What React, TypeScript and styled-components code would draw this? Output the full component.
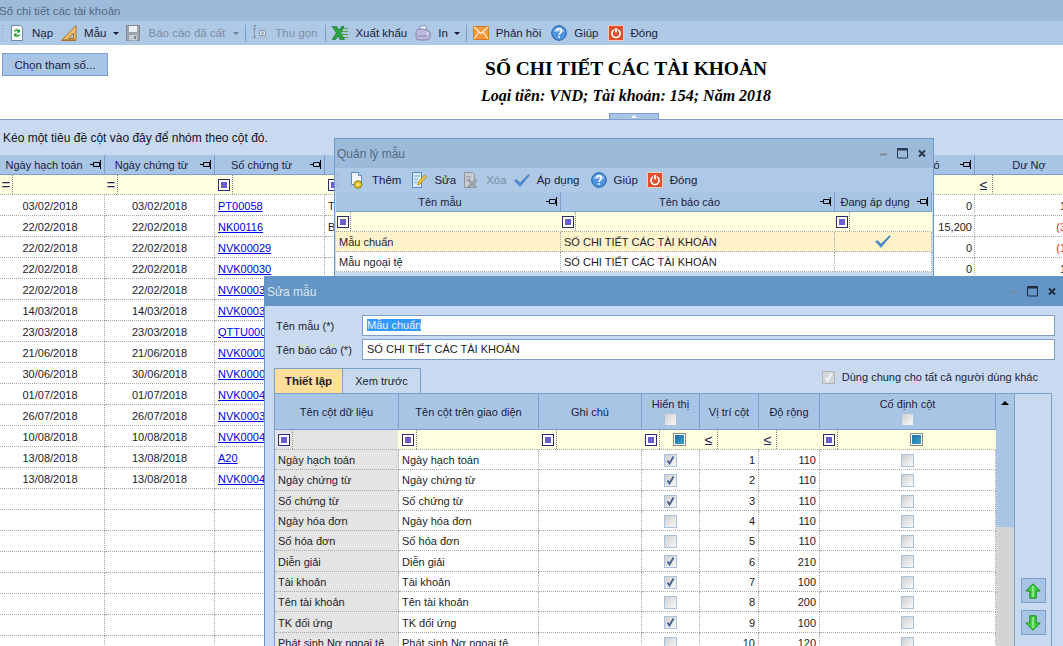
import styled, { createGlobalStyle } from "styled-components";

const GlobalStyle = createGlobalStyle`
  html, body {
    margin: 0;
    padding: 0;
    background: #fff;
    overflow: hidden;
  }
  body {
    font-family: "Liberation Sans", Arial, sans-serif;
    font-size: 11px;
    color: #1c1c28;
  }
`;

const HEADER_BG = "#a9c5e5";
const PANEL_BG = "#c9daf0";
const LINE = "#7d9fcb";
const DOTTED = "#a8a8a8";
const FILTER_BG = "#ffffdf";

const Page = styled.div`
  position: relative;
  width: 1063px;
  height: 646px;
  overflow: hidden;
  display: flex;
  flex-direction: column;
  background: #fff;
`;

const AppTitle = styled.div`
  height: 21px;
  flex-shrink: 0;
  box-sizing: border-box;
  padding-top: 1px;
  line-height: 20px;
  background: #9cbbda;
  color: #55677d;
  font-size: 11.5px;
  white-space: nowrap;
  text-indent: -1px;
`;

const Toolbar = styled.div<{ $height: number }>`
  height: ${(p) => p.$height}px;
  flex-shrink: 0;
  display: flex;
  align-items: center;
  background: #aec9e6;
  font-size: 11.5px;
  white-space: nowrap;
`;

const Grip = styled.span<{ $gap: number }>`
  width: 3px;
  height: 18px;
  margin: 0 ${(p) => p.$gap}px 0 1px;
  background-image: radial-gradient(#8ea6c2 0.8px, transparent 1px);
  background-size: 3px 3px;
`;

const ToolButton = styled.span<{ $disabled?: boolean; $after?: number }>`
  display: inline-flex;
  align-items: center;
  gap: 7px;
  margin-right: ${(p) => p.$after ?? 8}px;
  color: ${(p) => (p.$disabled ? "#7c8c9f" : "#1c1c3a")};
  svg {
    flex-shrink: 0;
  }
`;

const Caret = styled.span<{ $disabled?: boolean }>`
  width: 0;
  height: 0;
  margin: 0 6px 0 0;
  border-left: 3px solid transparent;
  border-right: 3px solid transparent;
  border-top: 3px solid ${(p) => (p.$disabled ? "#6f7f92" : "#1c1c3a")};
`;

const ToolSeparator = styled.span`
  width: 1px;
  height: 17px;
  background: #7d9fcb;
  margin: 0 6px 0 0;
`;

const ReportHeader = styled.div`
  height: 74px;
  flex-shrink: 0;
  display: flex;
  align-items: flex-start;
  position: relative;
  border-bottom: 1px solid ${LINE};
`;

const ParamButton = styled.button`
  width: 106px;
  height: 23px;
  margin: 8px 0 0 2px;
  padding: 0;
  flex-shrink: 0;
  background: ${HEADER_BG};
  border: 1px solid ${LINE};
  font: 11.5px "Liberation Sans", Arial, sans-serif;
  color: #1c1c3a;
`;

const ReportTitles = styled.div`
  flex: 1;
  padding: 13px 0 0 81px;
  text-align: center;
  color: #000;
  font-family: "Liberation Serif", "Times New Roman", serif;
  font-weight: bold;
`;

const ReportName = styled.div`
  font-size: 19.4px;
  line-height: 22px;
`;

const ReportSub = styled.div`
  font-size: 16px;
  line-height: 20px;
  margin-top: 6px;
  font-style: italic;
`;

const CollapseTab = styled.span`
  position: absolute;
  left: 609px;
  bottom: 0;
  width: 50px;
  height: 6px;
  display: flex;
  justify-content: center;
  align-items: center;
  background: ${HEADER_BG};
  border: 1px solid ${LINE};
  border-bottom: 0;
  box-sizing: border-box;
  &::after {
    content: "";
    border-left: 3px solid transparent;
    border-right: 3px solid transparent;
    border-bottom: 3px solid #fff;
  }
`;

const GroupPanel = styled.div`
  height: 35px;
  flex-shrink: 0;
  display: flex;
  align-items: center;
  padding: 0 0 0 3px;
  box-sizing: border-box;
  background: ${PANEL_BG};
  font-size: 12px;
  color: #14141e;
`;

const DataTable = styled.table<{ $width: number }>`
  table-layout: fixed;
  border-collapse: separate;
  border-spacing: 0;
  width: ${(p) => p.$width}px;
  font-size: 11px;
  flex-shrink: 0;
`;

const HeadCell = styled.th<{ $height?: number; $tall?: boolean }>`
  height: ${(p) => p.$height ?? 19}px;
  padding: 0 16px 0 0;
  position: relative;
  background: ${HEADER_BG};
  border-right: 1px solid ${LINE};
  border-bottom: 1px solid ${LINE};
  font-weight: normal;
  color: #1c1c3a;
  text-align: center;
  white-space: nowrap;
  overflow: hidden;
  ${(p) => p.$tall && "padding: 0;"}
`;

const PinSlot = styled.span`
  position: absolute;
  right: 2px;
  top: 50%;
  margin-top: -5px;
  display: flex;
`;

const HeadStack = styled.div`
  display: flex;
  flex-direction: column;
  align-items: center;
  gap: 3px;
  padding-top: 1px;
`;

const FilterRow = styled.td<{ $gray?: boolean; $height?: number }>`
  height: ${(p) => p.$height ?? 19}px;
  padding: 0;
  background: ${(p) => (p.$gray ? "#e4e4e4" : FILTER_BG)};
  border-right: 1px solid ${FILTER_BG};
  border-bottom: 1px dotted ${DOTTED};
`;

const FilterInner = styled.div`
  height: 100%;
  display: flex;
  align-items: center;
  position: relative;
`;

const FilterOp = styled.span<{ $width?: number }>`
  width: ${(p) => p.$width ?? 17}px;
  height: 100%;
  flex-shrink: 0;
  display: flex;
  align-items: center;
  justify-content: center;
  box-sizing: border-box;
  border-right: 1px dotted #888;
  color: #24245c;
  font-size: 15px;
`;

const LessEqual = styled.span`
  font-size: 14px;
  line-height: 1;
`;

const FilterSquare = styled.span`
  width: 6px;
  height: 6px;
  padding: 2px;
  border: 1px solid #2c2c6e;
  background: linear-gradient(#6a5fd0, #6a5fd0) content-box, #fff;
  display: block;
`;

const FilterCheck = styled.span`
  width: 9px;
  height: 9px;
  padding: 1px;
  border: 1px solid #8a8a8a;
  background: linear-gradient(135deg, #1b6fa8, #38a6c8) content-box, #fff;
  display: block;
  margin: 0 auto;
`;

const FilterCenter = styled.div`
  flex: 1;
  display: flex;
  justify-content: center;
`;

const Cell = styled.td<{
  $align?: string;
  $gray?: boolean;
  $selected?: boolean;
  $height?: number;
  $color?: string;
  $pad?: number;
  $padRight?: number;
}>`
  height: ${(p) => p.$height ?? 20}px;
  padding: 1px ${(p) => p.$padRight ?? p.$pad ?? 3}px 0 ${(p) => p.$pad ?? 3}px;
  box-sizing: border-box;
  text-align: ${(p) => p.$align ?? "left"};
  background: ${(p) => (p.$selected ? "#fff3cc" : p.$gray ? "#e4e4e4" : "#fff")};
  border-right: 1px dotted ${DOTTED};
  border-bottom: 1px dotted ${DOTTED};
  color: ${(p) => p.$color ?? "#1c1c28"};
  white-space: nowrap;
  overflow: hidden;
`;

const DocLink = styled.a`
  color: #0000ee;
  text-decoration: underline;
`;

const Win = styled.div<{ $left: number; $top: number; $width: number; $height: number; $title: string }>`
  position: absolute;
  left: ${(p) => p.$left}px;
  top: ${(p) => p.$top}px;
  width: ${(p) => p.$width}px;
  height: ${(p) => p.$height}px;
  box-sizing: border-box;
  border: 1px solid ${(p) => p.$title};
  overflow: hidden;
  background: ${PANEL_BG};
`;

const WinTitle = styled.div<{ $bg: string; $color: string; $height: number }>`
  height: ${(p) => p.$height}px;
  display: flex;
  align-items: center;
  justify-content: space-between;
  padding: 0 4px 0 2px;
  box-sizing: border-box;
  background: ${(p) => p.$bg};
  color: ${(p) => p.$color};
  font-size: 12px;
`;

const WinControls = styled.span`
  display: flex;
  align-items: center;
  gap: 8px;
`;

const ManagerBody = styled.div`
  padding: 0 1px;
`;

const FormBody = styled.div`
  padding: 9px 8px 0 9px;
`;

const FormRow = styled.div`
  display: flex;
  align-items: center;
  height: 21px;
  margin: 0 0 3px 2px;
  font-size: 11px;
  color: #1c1c28;
`;

const FormLabel = styled.label`
  width: 86px;
  flex-shrink: 0;
`;

const FormValue = styled.div`
  flex: 1;
  height: 21px;
  line-height: 19px;
  box-sizing: border-box;
  padding-left: 4px;
  background: #fff;
  border: 1px solid ${LINE};
`;

const SelectedText = styled.span`
  background: #3399ff;
  color: #e8f2ff;
`;

const TabRow = styled.div`
  display: flex;
  align-items: stretch;
  height: 25px;
  margin-top: 8px;
  font-size: 11px;
`;

const Tab = styled.span<{ $active?: boolean; $width: number }>`
  width: ${(p) => p.$width}px;
  display: flex;
  align-items: center;
  justify-content: center;
  box-sizing: border-box;
  border: 1px solid ${LINE};
  border-left-width: ${(p) => (p.$active ? 1 : 0)}px;
  border-bottom: 0;
  background: ${(p) => (p.$active ? "#ffe09a" : "transparent")};
  font-weight: ${(p) => (p.$active ? "bold" : "normal")};
  font-size: ${(p) => (p.$active ? 11.5 : 11)}px;
  color: #1c1c28;
`;

const ShareOption = styled.span`
  margin-left: auto;
  margin-right: 17px;
  display: flex;
  align-items: center;
  gap: 7px;
  padding-bottom: 7px;
  color: #1c1c3a;
`;

const GridFrame = styled.div`
  display: flex;
  width: 778px;
  border: 1px solid ${LINE};
  border-bottom: 0;
  box-sizing: border-box;
  height: 260px;
`;

const ScrollBar = styled.div`
  width: 18px;
  flex-shrink: 0;
  background: #d4d4d4;
  border-right: 1px solid ${LINE};
  position: relative;
`;

const ScrollThumb = styled.div`
  height: 133px;
  background: ${HEADER_BG};
  display: flex;
  justify-content: center;
  padding-top: 7px;
  box-sizing: border-box;
  &::before {
    content: "";
    height: 0;
    border-left: 4px solid transparent;
    border-right: 4px solid transparent;
    border-bottom: 4px solid #000;
  }
`;

const SidePanel = styled.div`
  flex: 1;
  display: flex;
  flex-direction: column;
  align-items: center;
  gap: 7px;
  padding-top: 184px;
`;

const ArrowButton = styled.span`
  width: 25px;
  height: 25px;
  box-sizing: border-box;
  display: flex;
  align-items: center;
  justify-content: center;
  background: ${HEADER_BG};
  border: 1px solid ${LINE};
`;

const CheckBoxWrap = styled.span<{ $disabled?: boolean }>`
  width: 13px;
  height: 13px;
  display: inline-flex;
  box-sizing: border-box;
  align-items: center;
  justify-content: center;
  vertical-align: middle;
  border: 1px solid ${(p) => (p.$disabled ? "#b4b4b4" : "#a9c0de")};
  background: ${(p) => (p.$disabled ? "#d4d7db" : "linear-gradient(135deg, #cfcfcf, #fafafa)")};
`;

function CheckBox({ checked, disabled }: { checked?: boolean; disabled?: boolean }) {
  return (
    <CheckBoxWrap $disabled={disabled}>
      {checked && (
        <svg width="11" height="11" viewBox="0 0 11 11">
          <path d="M2.500 5.500l2 3 4-7" fill="none" stroke={disabled ? "#f6f6f6" : "#41608f"} strokeWidth="1.800" />
        </svg>
      )}
    </CheckBoxWrap>
  );
}

function Pin() {
  return (
    <svg width="12" height="9" viewBox="0 0 12 9">
      <path d="M0 4.500h3M3.500 2.500h6v4h-6zM10.500 0v9" fill="none" stroke="#000" strokeWidth="1" />
    </svg>
  );
}

function ReloadIcon() {
  return (
    <svg width="16" height="16" viewBox="0 0 16 16">
      <path d="M2.500 .5h9l2 2v13h-11z" fill="#fdfdfd" stroke="#6d8a9c" />
      <path d="M5 6.500a3 3 0 0 1 5-1.500l1-1v3.500H7.500l1.200-1.200a1.600 1.600 0 0 0-2.500.5z" fill="#1e9e35" />
      <path d="M11 9.500a3 3 0 0 1-5 1.500l-1 1V8.500h3.500l-1.200 1.200a1.600 1.600 0 0 0 2.500-.5z" fill="#1e9e35" />
    </svg>
  );
}

function RulerIcon() {
  return (
    <svg width="16" height="16" viewBox="0 0 16 16">
      <path d="M.5 15.500L15 .5v15z" fill="#efbf68" stroke="#a8702a" />
      <path d="M7.500 13.500L12.500 8v5.500z" fill="#aec9e6" stroke="#a8702a" />
      <path d="M3 15v-1M5 15v-1M7 15v-1M9 15v-1M11 15v-1M13 15v-1" stroke="#8a5a20" />
    </svg>
  );
}

function SaveIcon() {
  return (
    <svg width="16" height="16" viewBox="0 0 16 16">
      <path d="M1.500 .5h13v15h-13z" fill="#9aa3ae" stroke="#7f8894" />
      <path d="M4 1h8v6H4z" fill="#eef0f3" />
      <path d="M4 10h8v5.500H4z" fill="#c9ced4" />
      <path d="M9 11h2v3H9z" fill="#7f8894" />
    </svg>
  );
}

function TreeIcon() {
  return (
    <svg width="16" height="16" viewBox="0 0 16 16">
      <path d="M1 3h3v1.500H3v7h1V13H1v-1.500h1v-7H1z" fill="#8c97a5" />
      <path d="M2 0h2v2H2z" fill="#8c97a5" />
      <path d="M6 3h9M6 13h9M10 3v10" stroke="#a9b3bf" strokeDasharray="1 1" fill="none" />
      <path d="M7.500 5.500h6v5h-6z" fill="#dfe5ec" stroke="#8c97a5" />
      <path d="M9 8h3M10.500 6.500v3" stroke="#8c97a5" />
    </svg>
  );
}

function ExcelIcon() {
  return (
    <svg width="16" height="16" viewBox="0 0 16 16">
      <path d="M9 3h7v1H9zM10 6h6v1h-6zM10 9h6v1h-6zM9 12h7v1H9z" fill="#5a9e4e" />
      <path d="M0 1.500h4.500l2.500 4 2.500-4h2.500L8.800 8l3.700 6.500H8L6 11l-2.500 3.500H0L4.500 8z" fill="#2aa63f" stroke="#0e6a24" strokeWidth=".6" />
    </svg>
  );
}

function PrinterIcon() {
  return (
    <svg width="16" height="16" viewBox="0 0 16 16">
      <path d="M4 1.500l6-1 2 4-6 1.500z" fill="#e9f1fb" stroke="#8b95c0" />
      <path d="M1 7c0-2 2-3 5-3s7 1 9 3v5c0 2-2 3-6 3H5c-3 0-4-1-4-3z" fill="#bdb9dc" stroke="#8682ae" />
      <path d="M3 11h9" stroke="#8682ae" />
      <circle cx="12.500" cy="8.500" r="1" fill="#f4f2ff" />
    </svg>
  );
}

function MailIcon() {
  return (
    <svg width="16" height="14" viewBox="0 0 16 14">
      <path d="M.5 .5h15v13H.5z" fill="#f59a3c" stroke="#d87a22" />
      <path d="M1 1l7 6.500L15 1M1 13l5-7M15 13l-5-7" fill="none" stroke="#fff1dc" strokeWidth="1.200" />
    </svg>
  );
}

function HelpIcon() {
  return (
    <svg width="16" height="16" viewBox="0 0 16 16">
      <circle cx="8" cy="8" r="7.300" fill="#4f94dc" stroke="#1f5ea8" />
      <path d="M2.500 7a5.600 5.600 0 0 1 11 0z" fill="#8fbdec" />
      <path d="M5.800 6a2.300 2.300 0 1 1 3.500 2c-.9.600-1.300 1-1.300 2" fill="none" stroke="#fff" strokeWidth="1.600" />
      <circle cx="8" cy="12" r="1" fill="#fff" />
    </svg>
  );
}

function PowerIcon() {
  return (
    <svg width="16" height="16" viewBox="0 0 16 16">
      <path d="M.5 .5h15v15H.5z" fill="#dc4f2f" stroke="#f6c8ba" />
      <circle cx="8" cy="8.500" r="4" fill="none" stroke="#fff" strokeWidth="1.700" />
      <path d="M8 3v4.500" stroke="#dc4f2f" strokeWidth="3.500" />
      <path d="M8 3v4.500" stroke="#fff" strokeWidth="1.700" />
    </svg>
  );
}

function AddDocIcon() {
  return (
    <svg width="16" height="17" viewBox="0 0 16 17">
      <path d="M2.500 .5h7l3 3v9h-10z" fill="#f2f7fd" stroke="#5c8fc4" />
      <path d="M9.500 .5v3h3" fill="#cfe0f3" stroke="#5c8fc4" />
      <circle cx="9" cy="12.500" r="3.800" fill="#e6c62e" stroke="#8f7a14" />
      <circle cx="9" cy="12.500" r="1.200" fill="#fdf3a8" />
    </svg>
  );
}

function EditIcon() {
  return (
    <svg width="16" height="16" viewBox="0 0 16 16">
      <path d="M1.500 .5h9v15h-9z" fill="#d8ecfb" stroke="#4d90c8" />
      <path d="M3 4h6M3 7h4M3 10h3" stroke="#77aad4" />
      <path d="M6.500 13l.7-3L13.500 3l2 2-6.300 7z" fill="#f2c23e" stroke="#a57c18" strokeWidth=".7" />
    </svg>
  );
}

function DeleteIcon() {
  return (
    <svg width="16" height="16" viewBox="0 0 16 16">
      <path d="M1.500 .5h8l2 2v13h-10z" fill="#c8ccd1" stroke="#8d939b" />
      <path d="M3 5h5M3 8h4" stroke="#8d939b" />
      <path d="M6 7l3 3 3-3 2 2-3 3 3 3-2 1-3-3-3 3-1-2 3-2-3-3z" fill="#a0a5ac" stroke="#7f858d" strokeWidth=".5" />
    </svg>
  );
}

function CheckIcon() {
  return (
    <svg width="16" height="16" viewBox="0 0 16 16">
      <path d="M.5 8.500l2-1 3.500 3.500L14.500 2.500l1 .7L6 14.500z" fill="#4a8ad4" stroke="#2a5f9f" strokeWidth=".4" />
    </svg>
  );
}

function ArrowUp() {
  return (
    <svg width="16" height="16" viewBox="0 0 16 16">
      <path d="M8 .8L15.200 8h-4v7.200H4.800V8h-4z" fill="#3fd03f" stroke="#1b8a1b" />
      <path d="M8 3v11" stroke="#9cf09c" strokeWidth="1.500" />
    </svg>
  );
}

function ArrowDown() {
  return (
    <svg width="16" height="16" viewBox="0 0 16 16">
      <path d="M8 15.200L15.200 8h-4V.8H4.800V8h-4z" fill="#3fd03f" stroke="#1b8a1b" />
      <path d="M8 2v11" stroke="#9cf09c" strokeWidth="1.500" />
    </svg>
  );
}

function Controls({ color }: { color: string }) {
  return (
    <WinControls>
      <svg width="10" height="12" viewBox="0 0 10 12">
        <path d="M1 6.500h7" stroke="#7d8896" strokeWidth="2" />
      </svg>
      <svg width="12" height="11" viewBox="0 0 12 11">
        <path d="M.5 .5h10v9.500H.5z" fill="none" stroke={color} />
        <path d="M0 1.500h11" stroke={color} strokeWidth="2" />
      </svg>
      <svg width="12" height="10" viewBox="0 0 12 10">
        <path d="M2 1.500l6 6M8 1.500l-6 6" stroke={color} strokeWidth="2" />
      </svg>
    </WinControls>
  );
}

const mainRows: [string, string][] = [
  ["03/02/2018", "PT00058"],
  ["22/02/2018", "NK00116"],
  ["22/02/2018", "NVK00029"],
  ["22/02/2018", "NVK00030"],
  ["22/02/2018", "NVK00031"],
  ["14/03/2018", "NVK00032"],
  ["23/03/2018", "QTTU00001"],
  ["21/06/2018", "NVK00001"],
  ["30/06/2018", "NVK00002"],
  ["01/07/2018", "NVK00041"],
  ["26/07/2018", "NVK00033"],
  ["10/08/2018", "NVK00042"],
  ["13/08/2018", "A20"],
  ["13/08/2018", "NVK00043"],
];

const sideValues = [
  { detail: "T", credit: "0", debt: "1", red: false },
  { detail: "B", credit: "15,200", debt: "(3", red: true },
  { detail: "", credit: "0", debt: "(1", red: true },
  { detail: "", credit: "0", debt: "1", red: false },
];

const emptyRows = Array.from({ length: 8 }, (_, i) => i);

const fieldRows: [string, boolean, number, number][] = [
  ["Ngày hạch toán", true, 1, 110],
  ["Ngày chứng từ", true, 2, 110],
  ["Số chứng từ", true, 3, 110],
  ["Ngày hóa đơn", false, 4, 110],
  ["Số hóa đơn", false, 5, 110],
  ["Diễn giải", true, 6, 210],
  ["Tài khoản", true, 7, 100],
  ["Tên tài khoản", false, 8, 200],
  ["TK đối ứng", true, 9, 100],
  ["Phát sinh Nợ ngoại tệ", false, 10, 120],
];

function MainGrid() {
  const widths = [105, 110, 110, 582, 68, 125];
  return (
    <DataTable $width={1100}>
      <colgroup>
        {widths.map((w, i) => (
          <col key={i} width={w} />
        ))}
      </colgroup>
      <thead>
        <tr>
          {["Ngày hạch toán", "Ngày chứng từ", "Số chứng từ", "Diễn giải", "Có", "Dư Nợ"].map((t) => (
            <HeadCell key={t}>
              {t}
              <PinSlot>
                <Pin />
              </PinSlot>
            </HeadCell>
          ))}
        </tr>
        <tr>
          <FilterRow>
            <FilterInner>
              <FilterOp $width={13}>=</FilterOp>
            </FilterInner>
          </FilterRow>
          <FilterRow>
            <FilterInner>
              <FilterOp $width={13}>=</FilterOp>
            </FilterInner>
          </FilterRow>
          <FilterRow>
            <FilterInner>
              <FilterOp $width={18}>
                <FilterSquare />
              </FilterOp>
            </FilterInner>
          </FilterRow>
          <FilterRow>
            <FilterInner>
              <FilterOp $width={18}>
                <FilterSquare />
              </FilterOp>
            </FilterInner>
          </FilterRow>
          <FilterRow />
          <FilterRow>
            <FilterInner>
              <FilterOp $width={18}>
                <LessEqual>≤</LessEqual>
              </FilterOp>
            </FilterInner>
          </FilterRow>
        </tr>
      </thead>
      <tbody>
        {mainRows.map(([date, doc], i) => (
          <tr key={i}>
            <Cell $height={21} $align="center" $pad={0} $padRight={4}>
              {date}
            </Cell>
            <Cell $height={21} $align="center" $pad={0}>
              {date}
            </Cell>
            <Cell $height={21}>
              <DocLink>{doc}</DocLink>
            </Cell>
            <Cell $height={21}>{sideValues[i]?.detail}</Cell>
            <Cell $height={21} $align="right" $pad={2}>
              {sideValues[i]?.credit}
            </Cell>
            <Cell $height={21} $align="right" $padRight={33} $color={sideValues[i]?.red ? "#e8261c" : undefined}>
              {sideValues[i]?.debt}
            </Cell>
          </tr>
        ))}
        {emptyRows.map((i) => (
          <tr key={i}>
            {widths.map((w, j) => (
              <Cell key={j} $height={21} />
            ))}
          </tr>
        ))}
      </tbody>
    </DataTable>
  );
}

function TemplateGrid() {
  return (
    <DataTable $width={596}>
      <colgroup>
        <col width={225} />
        <col width={274} />
        <col width={97} />
      </colgroup>
      <thead>
        <tr>
          {["Tên mẫu", "Tên báo cáo", "Đang áp dụng"].map((t) => (
            <HeadCell key={t}>
              {t}
              <PinSlot>
                <Pin />
              </PinSlot>
            </HeadCell>
          ))}
        </tr>
        <tr>
          {[0, 1, 2].map((i) => (
            <FilterRow key={i}>
              <FilterInner>
                <FilterOp $width={15}>
                  <FilterSquare />
                </FilterOp>
              </FilterInner>
            </FilterRow>
          ))}
        </tr>
      </thead>
      <tbody>
        <tr>
          <Cell $selected>Mẫu chuẩn</Cell>
          <Cell $selected>SỔ CHI TIẾT CÁC TÀI KHOẢN</Cell>
          <Cell $selected $align="center">
            <CheckIcon />
          </Cell>
        </tr>
        <tr>
          <Cell>Mẫu ngoại tệ</Cell>
          <Cell>SỔ CHI TIẾT CÁC TÀI KHOẢN</Cell>
          <Cell />
        </tr>
      </tbody>
    </DataTable>
  );
}

function FieldGrid() {
  return (
    <DataTable $width={721}>
      <colgroup>
        <col width={124} />
        <col width={140} />
        <col width={103} />
        <col width={58} />
        <col width={59} />
        <col width={61} />
        <col width={176} />
      </colgroup>
      <thead>
        <tr>
          <HeadCell $height={35} $tall>
            Tên cột dữ liệu
          </HeadCell>
          <HeadCell $height={35} $tall>
            Tên cột trên giao diện
          </HeadCell>
          <HeadCell $height={35} $tall>
            Ghi chú
          </HeadCell>
          <HeadCell $height={35} $tall>
            <HeadStack>
              Hiển thị
              <CheckBox />
            </HeadStack>
          </HeadCell>
          <HeadCell $height={35} $tall>
            Vị trí cột
          </HeadCell>
          <HeadCell $height={35} $tall>
            Độ rộng
          </HeadCell>
          <HeadCell $height={35} $tall>
            <HeadStack>
              Cố định cột
              <CheckBox />
            </HeadStack>
          </HeadCell>
        </tr>
        <tr>
          <FilterRow $gray>
            <FilterInner>
              <FilterOp $width={18}>
                <FilterSquare />
              </FilterOp>
            </FilterInner>
          </FilterRow>
          <FilterRow>
            <FilterInner>
              <FilterOp $width={18}>
                <FilterSquare />
              </FilterOp>
            </FilterInner>
          </FilterRow>
          <FilterRow>
            <FilterInner>
              <FilterOp $width={18}>
                <FilterSquare />
              </FilterOp>
            </FilterInner>
          </FilterRow>
          <FilterRow>
            <FilterInner>
              <FilterOp $width={18}>
                <FilterSquare />
              </FilterOp>
              <FilterCenter>
                <FilterCheck />
              </FilterCenter>
            </FilterInner>
          </FilterRow>
          <FilterRow>
            <FilterInner>
              <FilterOp $width={18}>
                <LessEqual>≤</LessEqual>
              </FilterOp>
            </FilterInner>
          </FilterRow>
          <FilterRow>
            <FilterInner>
              <FilterOp $width={18}>
                <LessEqual>≤</LessEqual>
              </FilterOp>
            </FilterInner>
          </FilterRow>
          <FilterRow>
            <FilterInner>
              <FilterOp $width={18}>
                <FilterSquare />
              </FilterOp>
              <FilterCenter>
                <FilterCheck />
              </FilterCenter>
            </FilterInner>
          </FilterRow>
        </tr>
      </thead>
      <tbody>
        {fieldRows.map(([name, shown, pos, width]) => (
          <tr key={name}>
            <Cell $gray>{name}</Cell>
            <Cell>{name}</Cell>
            <Cell />
            <Cell $align="center">
              <CheckBox checked={shown} />
            </Cell>
            <Cell $align="right">{pos}</Cell>
            <Cell $align="right">{width}</Cell>
            <Cell $align="center">
              <CheckBox />
            </Cell>
          </tr>
        ))}
      </tbody>
    </DataTable>
  );
}

export default function App() {
  return (
    <Page>
      <GlobalStyle />
      <AppTitle>Sổ chi tiết các tài khoản</AppTitle>
      <Toolbar $height={24}>
        <Grip $gap={5} />
        <ToolButton>
          <ReloadIcon />
          Nạp
        </ToolButton>
        <ToolButton $after={7}>
          <RulerIcon />
          Mẫu
        </ToolButton>
        <Caret />
        <ToolButton $disabled $after={8}>
          <SaveIcon />
          Báo cáo đã cất
        </ToolButton>
        <Caret $disabled />
        <ToolSeparator />
        <ToolButton $disabled $after={8}>
          <TreeIcon />
          Thu gọn
        </ToolButton>
        <ToolSeparator />
        <ToolButton>
          <ExcelIcon />
          Xuất khẩu
        </ToolButton>
        <ToolButton $after={6}>
          <PrinterIcon />
          In
        </ToolButton>
        <Caret />
        <ToolSeparator />
        <ToolButton $after={10}>
          <MailIcon />
          Phản hồi
        </ToolButton>
        <ToolButton $after={9}>
          <HelpIcon />
          Giúp
        </ToolButton>
        <ToolButton>
          <PowerIcon />
          Đóng
        </ToolButton>
      </Toolbar>
      <ReportHeader>
        <ParamButton>Chọn tham số...</ParamButton>
        <ReportTitles>
          <ReportName>SỔ CHI TIẾT CÁC TÀI KHOẢN</ReportName>
          <ReportSub>Loại tiền: VND; Tài khoản: 154; Năm 2018</ReportSub>
        </ReportTitles>
        <CollapseTab />
      </ReportHeader>
      <GroupPanel>Kéo một tiêu đề cột vào đây để nhóm theo cột đó.</GroupPanel>
      <MainGrid />

      <Win $left={334} $top={138} $width={600} $height={170} $title="#6a9bd0">
        <WinTitle $bg="#9cbbda" $color="#55677d" $height={29}>
          Quản lý mẫu
          <Controls color="#2a3a50" />
        </WinTitle>
        <Toolbar $height={24}>
          <Grip $gap={10} />
          <ToolButton $after={10}>
            <AddDocIcon />
            Thêm
          </ToolButton>
          <ToolButton $after={7}>
            <EditIcon />
            Sửa
          </ToolButton>
          <ToolButton $disabled $after={7}>
            <DeleteIcon />
            Xóa
          </ToolButton>
          <ToolButton $after={11}>
            <CheckIcon />
            Áp dụng
          </ToolButton>
          <ToolButton $after={9}>
            <HelpIcon />
            Giúp
          </ToolButton>
          <ToolButton>
            <PowerIcon />
            Đóng
          </ToolButton>
        </Toolbar>
        <ManagerBody>
          <TemplateGrid />
        </ManagerBody>
      </Win>

      <Win $left={264} $top={276} $width={800} $height={372} $title="#6395c6">
        <WinTitle $bg="#6395c6" $color="#dbe6f2" $height={29}>
          Sửa mẫu
          <Controls color="#1f2d40" />
        </WinTitle>
        <FormBody>
          <FormRow>
            <FormLabel>Tên mẫu (*)</FormLabel>
            <FormValue>
              <SelectedText>Mẫu chuẩn</SelectedText>
            </FormValue>
          </FormRow>
          <FormRow>
            <FormLabel>Tên báo cáo (*)</FormLabel>
            <FormValue>SỔ CHI TIẾT CÁC TÀI KHOẢN</FormValue>
          </FormRow>
          <TabRow>
            <Tab $active $width={69}>
              Thiết lập
            </Tab>
            <Tab $width={78}>Xem trước</Tab>
            <ShareOption>
              <CheckBox checked disabled />
              Dùng chung cho tất cả người dùng khác
            </ShareOption>
          </TabRow>
          <GridFrame>
            <FieldGrid />
            <ScrollBar>
              <ScrollThumb />
            </ScrollBar>
            <SidePanel>
              <ArrowButton>
                <ArrowUp />
              </ArrowButton>
              <ArrowButton>
                <ArrowDown />
              </ArrowButton>
            </SidePanel>
          </GridFrame>
        </FormBody>
      </Win>
    </Page>
  );
}
